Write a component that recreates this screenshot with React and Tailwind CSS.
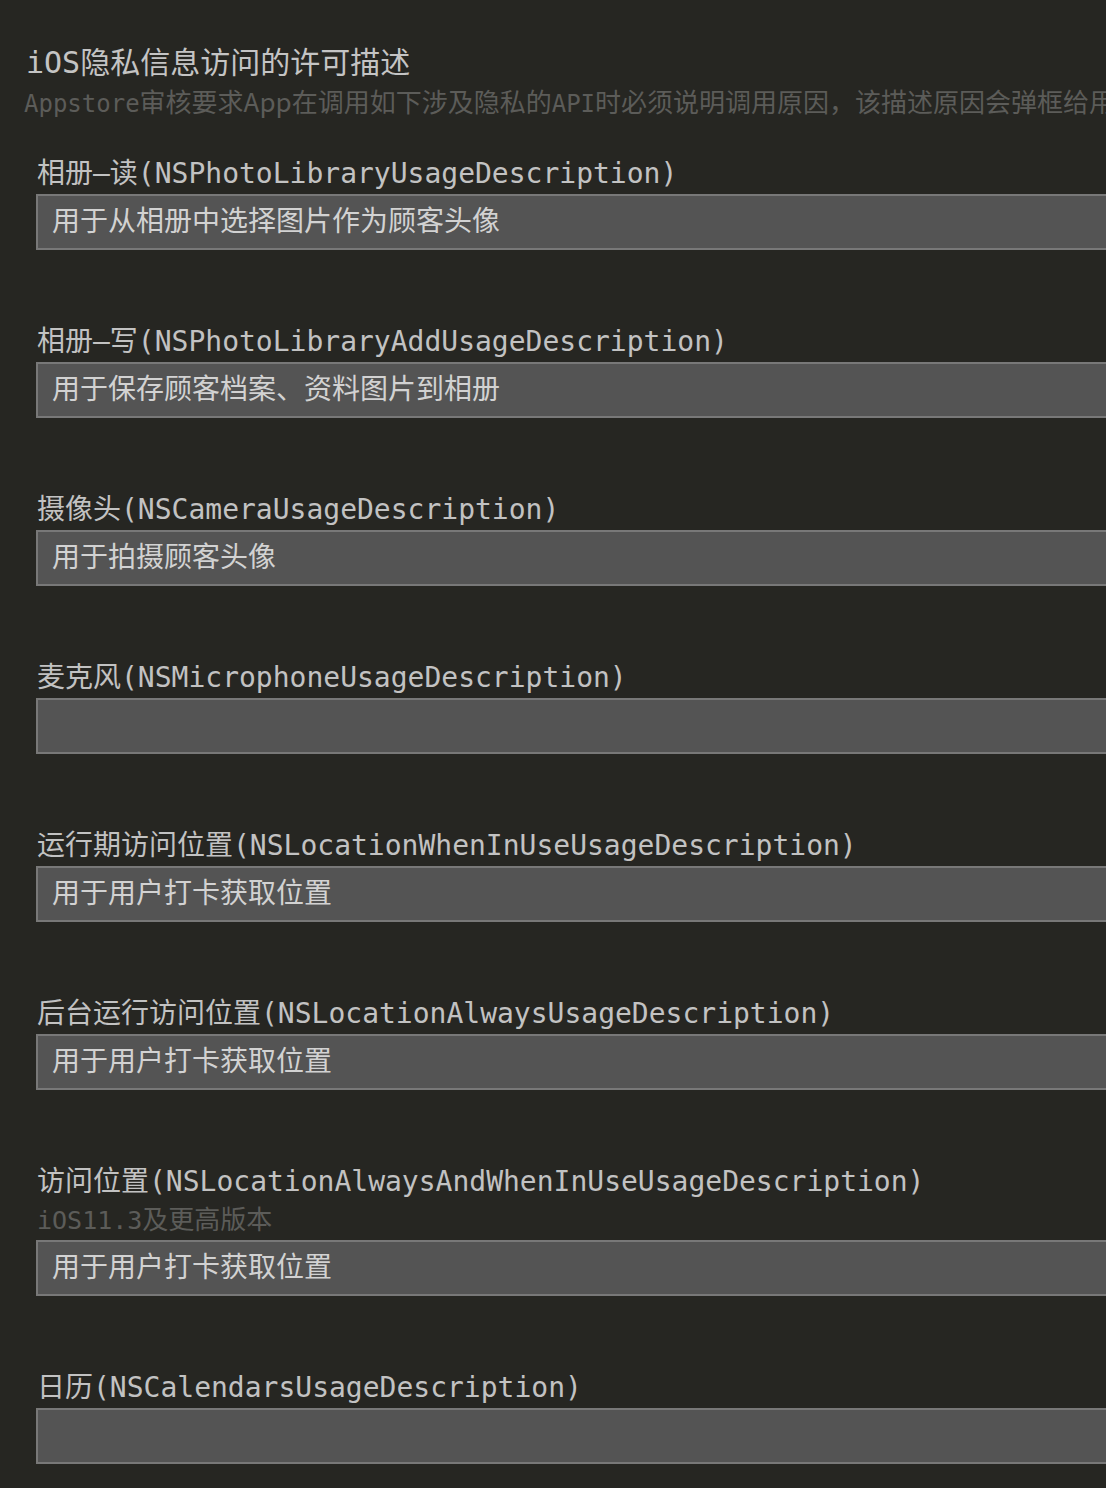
const items = [
  { label: "相册–读(NSPhotoLibraryUsageDescription)", value: "用于从相册中选择图片作为顾客头像" },
  { label: "相册–写(NSPhotoLibraryAddUsageDescription)", value: "用于保存顾客档案、资料图片到相册" },
  { label: "摄像头(NSCameraUsageDescription)", value: "用于拍摄顾客头像" },
  { label: "麦克风(NSMicrophoneUsageDescription)", value: "" },
  { label: "运行期访问位置(NSLocationWhenInUseUsageDescription)", value: "用于用户打卡获取位置" },
  { label: "后台运行访问位置(NSLocationAlwaysUsageDescription)", value: "用于用户打卡获取位置" },
  {
    label: "访问位置(NSLocationAlwaysAndWhenInUseUsageDescription)",
    note: true,
    value: "用于用户打卡获取位置",
  },
  { label: "日历(NSCalendarsUsageDescription)", value: "" },
];

const font = {
  fontFamily: '"DejaVu Sans Mono", "Noto Sans CJK SC", monospace',
};

const cjk = { fontFamily: '"Noto Sans CJK SC", sans-serif' };

const App = () => {
  return (
    <div className="min-h-[1488px] w-[1106px] overflow-hidden bg-[#262622]" style={font}>
      <div className="w-[1300px] pt-[43px]">
        {/* Header */}
        <h1 className="pl-[26px] text-[30px] leading-[40px] text-[#c4c4c4]">
          iOS隐私信息访问的许可描述
        </h1>
        <p className="h-[40px] overflow-hidden pl-[24px] text-[26px] leading-[40px] text-[#5c5c59] whitespace-nowrap">
          <span className="text-[24px] leading-none">Appstore</span>审核要求
          <span className="leading-none" style={cjk}>App</span>在调用如下涉及隐私的
          <span className="text-[24px] leading-none">API</span>
          时必须说明调用原因，该描述原因会弹框给用户查看
        </p>

        {/* Fields */}
        <div className="mt-[31px] pl-[36px] flex flex-col gap-[72px]">
          {items.map((item) => (
            <div key={item.label} className="flex flex-col">
              <label className="pl-px text-[28px] leading-[40px] text-[#c2c2c2] whitespace-nowrap">
                {item.label}
              </label>
              {item.note && (
                <p className="h-[38px] overflow-hidden pl-px text-[26px] leading-[36px] text-[#5c5c59]">
                  <span className="text-[25px] leading-none">iOS11.3</span>及更高版本
                </p>
              )}
              <div className="h-[56px] border-2 border-[#787878] bg-[#545454] pl-[14px] flex items-center">
                <span className="text-[28px] text-[#d2d2d2]">{item.value}</span>
              </div>
            </div>
          ))}
        </div>
      </div>
    </div>
  );
};

export default App;
